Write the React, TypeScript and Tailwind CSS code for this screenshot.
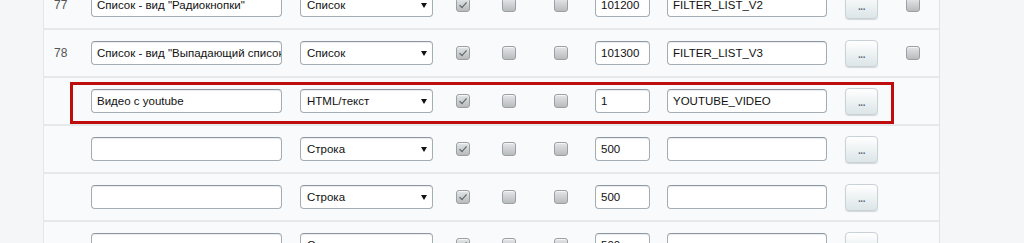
const rows = [
  { num: "77", name: 'Список - вид "Радиокнопки"', type: "Список", sort: "101200", code: "FILTER_LIST_V2", last: true },
  { num: "78", name: 'Список - вид "Выпадающий список"', type: "Список", sort: "101300", code: "FILTER_LIST_V3", last: true },
  { num: "", name: "Видео с youtube", type: "HTML/текст", sort: "1", code: "YOUTUBE_VIDEO", last: false, marked: true },
  { num: "", name: "", type: "Строка", sort: "500", code: "", last: false },
  { num: "", name: "", type: "Строка", sort: "500", code: "", last: false },
  { num: "", name: "", type: "Строка", sort: "500", code: "", last: false },
];

const field =
  "h-[24px] rounded-[4px] border border-[#a3adb5] border-t-[#8d97a1] bg-white px-[5px] text-[11.5px] leading-[22px] text-[#111] overflow-hidden whitespace-nowrap shadow-[inset_0_1px_1px_rgba(0,0,0,0.08)]";

function Checkbox({ checked }: { checked?: boolean }) {
  return (
    <div className="relative h-[14px] w-[14px] rounded-[3px] border border-[#9a9fa3] bg-gradient-to-b from-[#e4e6e7] to-[#b7bcbf] shadow-[inset_0_1px_0_rgba(255,255,255,0.6)]">
      {checked && (
        <svg viewBox="0 0 14 14" className="absolute -left-px -top-px h-[14px] w-[14px]">
          <path d="M3.5 7.2 L6 9.6 L10.6 4.4" fill="none" stroke="#6a6f73" strokeWidth="1.4" />
        </svg>
      )}
    </div>
  );
}

function DotsButton() {
  return (
    <div className="flex h-[27px] w-[33px] items-center justify-center rounded-[4px] border border-[#c9d2d6] bg-gradient-to-b from-white to-[#dce5e8] shadow-[0_1px_1px_rgba(0,0,0,0.15)]">
      <span className="pt-[3px] text-[10px] font-bold leading-none tracking-[-0.5px] text-[#5d6f86]">...</span>
    </div>
  );
}

export default function App() {
  return (
    <div className="flex h-[243px] w-[1024px] overflow-hidden bg-[#f4f6f7] font-['Liberation_Sans',Arial,sans-serif]">
      <div className="w-[44px] shrink-0 border-r border-[#e2e7e9]" />
      <div className="w-[896px] shrink-0 border-r border-[#dfe4e6] bg-[#f8fafb]">
        <div className="-mt-[18px]">
          {rows.map((r, i) => (
            <div key={i} className="relative flex h-[48px] items-center border-b-2 border-[#e5e9eb]">
              <div className="w-[47px] shrink-0 pl-[10px] text-[12px] text-[#555]">{r.num}</div>
              <div className="w-[209px] shrink-0">
                <div className={`${field} w-[191px]`}>{r.name}</div>
              </div>
              <div className="w-[156px] shrink-0">
                <div className={`${field} relative w-[133px] pl-[6px]`}>
                  {r.type}
                  <svg viewBox="0 0 6 5" className="absolute right-[5px] top-[9px] h-[5px] w-[6px]">
                    <polygon points="0,0 6,0 3,5" fill="#111" />
                  </svg>
                </div>
              </div>
              <div className="w-[46px] shrink-0">
                <Checkbox checked />
              </div>
              <div className="w-[52px] shrink-0">
                <Checkbox />
              </div>
              <div className="w-[41px] shrink-0">
                <Checkbox />
              </div>
              <div className="w-[72px] shrink-0">
                <div className={`${field} w-[55px]`}>{r.sort}</div>
              </div>
              <div className="w-[178px] shrink-0">
                <div className={`${field} w-[160px]`}>{r.code}</div>
              </div>
              <div className="w-[61px] shrink-0">
                <DotsButton />
              </div>
              <div className="shrink-0">{r.last && <Checkbox />}</div>
              {r.marked && (
                <div className="absolute left-[26px] top-[4px] h-[42px] w-[824px] border-[3px] border-[#bf0d0d]" />
              )}
            </div>
          ))}
        </div>
      </div>
      <div className="flex-1" />
    </div>
  );
}
